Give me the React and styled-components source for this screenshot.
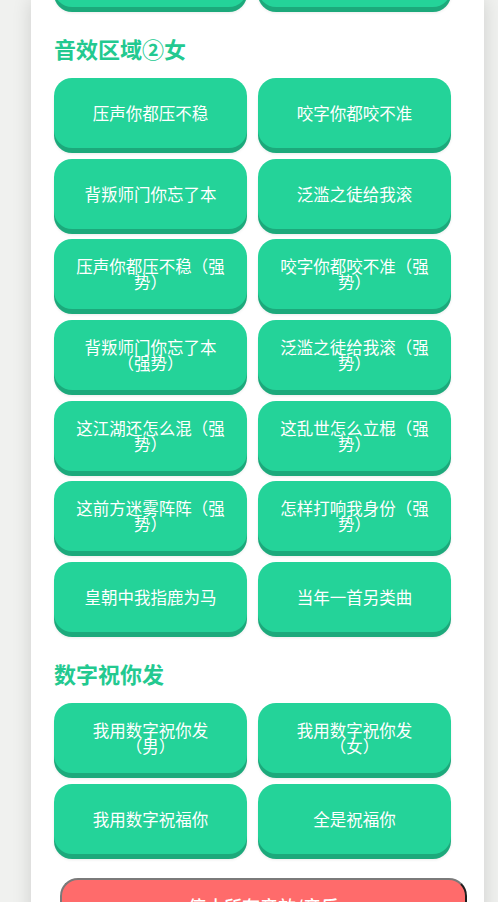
import React from "react";
import styled, { createGlobalStyle } from "styled-components";

const Global = createGlobalStyle`
  html, body { margin: 0; padding: 0; }
  body {
    background: #f0f1ef;
    font-family: "Noto Sans CJK SC", "Noto Sans", sans-serif;
    overflow: hidden;
  }
`;

const Page = styled.div`
  width: 453px;
  min-height: 902px;
  margin-left: 31px;
  background: #ffffff;
  box-shadow: 0 0 18px rgba(0, 0, 0, 0.14);
  padding: 0 33px 40px 23px;
  box-sizing: border-box;
  overflow: hidden;
`;

const Scrolled = styled.div`
  margin-top: -63px;
`;

const Section = styled.section`
  display: flex;
  flex-direction: column;
`;

const Heading = styled.h2`
  margin: 30px 0 19px 0;
  font-size: 22px;
  line-height: 22px;
  font-weight: 700;
  color: #23c990;
`;

const Grid = styled.div`
  display: grid;
  grid-template-columns: 1fr 1fr;
  column-gap: 11px;
  row-gap: 10.67px;
`;

const SoundButton = styled.button`
  height: 70px;
  padding: 0 20px;
  border: none;
  border-radius: 18px;
  background: #24d399;
  box-shadow: 0 5px 0 #1ca97b, 0 6px 3px rgba(0, 0, 0, 0.08);
  color: #ffffff;
  font-family: "Noto Sans CJK SC", sans-serif;
  font-size: 16.5px;
  line-height: 16px;
  text-align: center;
  text-spacing-trim: space-all;
  display: flex;
  align-items: center;
  justify-content: center;
  cursor: pointer;
`;

const StopButton = styled.button`
  display: block;
  width: 407px;
  height: 56px;
  margin: 24px 0 0 6px;
  border: 2px solid;
  border-color: #7a7a7a #1e1e1e #1e1e1e #7a7a7a;
  border-radius: 18px;
  background: #ff6b6b;
  color: #ffffff;
  font-family: "Noto Sans CJK SC", sans-serif;
  font-size: 18px;
  font-weight: 500;
  line-height: 22px;
  padding: 0;
`;

const previous = ["霸气登场", "全场安静"];

const female = [
  "压声你都压不稳",
  "咬字你都咬不准",
  "背叛师门你忘了本",
  "泛滥之徒给我滚",
  "压声你都压不稳（强势）",
  "咬字你都咬不准（强势）",
  "背叛师门你忘了本（强势）",
  "泛滥之徒给我滚（强势）",
  "这江湖还怎么混（强势）",
  "这乱世怎么立棍（强势）",
  "这前方迷雾阵阵（强势）",
  "怎样打响我身份（强势）",
  "皇朝中我指鹿为马",
  "当年一首另类曲",
];

const numbers = [
  "我用数字祝你发（男）",
  "我用数字祝你发（女）",
  "我用数字祝福你",
  "全是祝福你",
];

export default function App() {
  return (
    <>
      <Global />
      <Page>
        <Scrolled>
          <Grid>
            {previous.map((t) => (
              <SoundButton key={t}>{t}</SoundButton>
            ))}
          </Grid>
          <Section>
            <Heading>音效区域②女</Heading>
            <Grid>
              {female.map((t) => (
                <SoundButton key={t}>{t}</SoundButton>
              ))}
            </Grid>
          </Section>
          <Section>
            <Heading>数字祝你发</Heading>
            <Grid>
              {numbers.map((t) => (
                <SoundButton key={t}>{t}</SoundButton>
              ))}
            </Grid>
          </Section>
          <StopButton>停止所有音效/音乐</StopButton>
        </Scrolled>
      </Page>
    </>
  );
}
